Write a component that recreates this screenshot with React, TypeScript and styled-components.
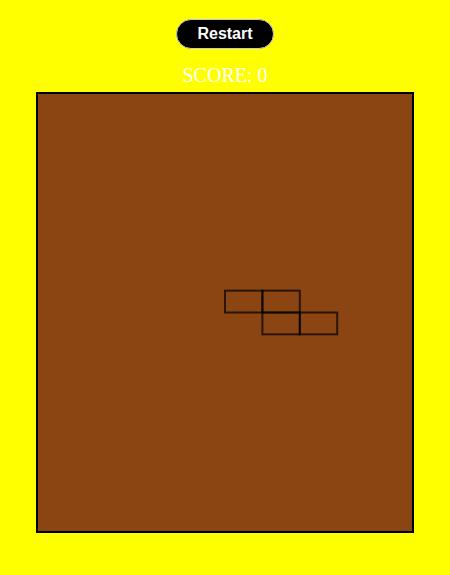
import React from "react";
import styled, { createGlobalStyle } from "styled-components";

const Global = createGlobalStyle`
  html, body { margin: 0; padding: 0; background: #ffff00; }
  body { font-family: "Liberation Serif", serif; }
`;

const Page = styled.div`
  display: flex;
  flex-direction: column;
  align-items: center;
  padding-top: 19px;
  min-height: 575px;
  box-sizing: border-box;
  background: #ffff00;
`;

const RestartButton = styled.button`
  box-sizing: border-box;
  width: 98px;
  height: 30px;
  border-radius: 15px;
  border: 1.5px solid #c8c8c8;
  background: #000;
  color: #fff;
  font-family: "Liberation Sans", Arial, sans-serif;
  font-weight: bold;
  font-size: 16px;
  padding: 0;
  cursor: pointer;
`;

const Score = styled.div`
  margin-top: 15px;
  font-family: "Liberation Serif", serif;
  font-size: 20px;
  line-height: 23px;
  color: #fff;
`;

const Board = styled.div`
  margin-top: 5px;
  width: 374px;
  height: 437px;
  border: 2px solid #000;
  background: #8b4513;
`;

const COLS = 10;
const ROWS = 20;
const W = 374;
const H = 437;
const cw = W / COLS;
const ch = H / ROWS;
const piece: [number, number][] = [
  [5, 9],
  [6, 9],
  [6, 10],
  [7, 10],
];

export default function App() {
  return (
    <>
      <Global />
      <Page>
        <RestartButton>Restart</RestartButton>
        <Score>SCORE: 0</Score>
        <Board>
          <svg width={W} height={H} style={{ display: "block" }}>
            {piece.map(([c, r]) => (
              <rect
                key={`${c}-${r}`}
                x={c * cw}
                y={r * ch}
                width={cw}
                height={ch}
                fill="none"
                stroke="rgba(0,0,0,0.7)"
                strokeWidth={2}
              />
            ))}
          </svg>
        </Board>
      </Page>
    </>
  );
}
